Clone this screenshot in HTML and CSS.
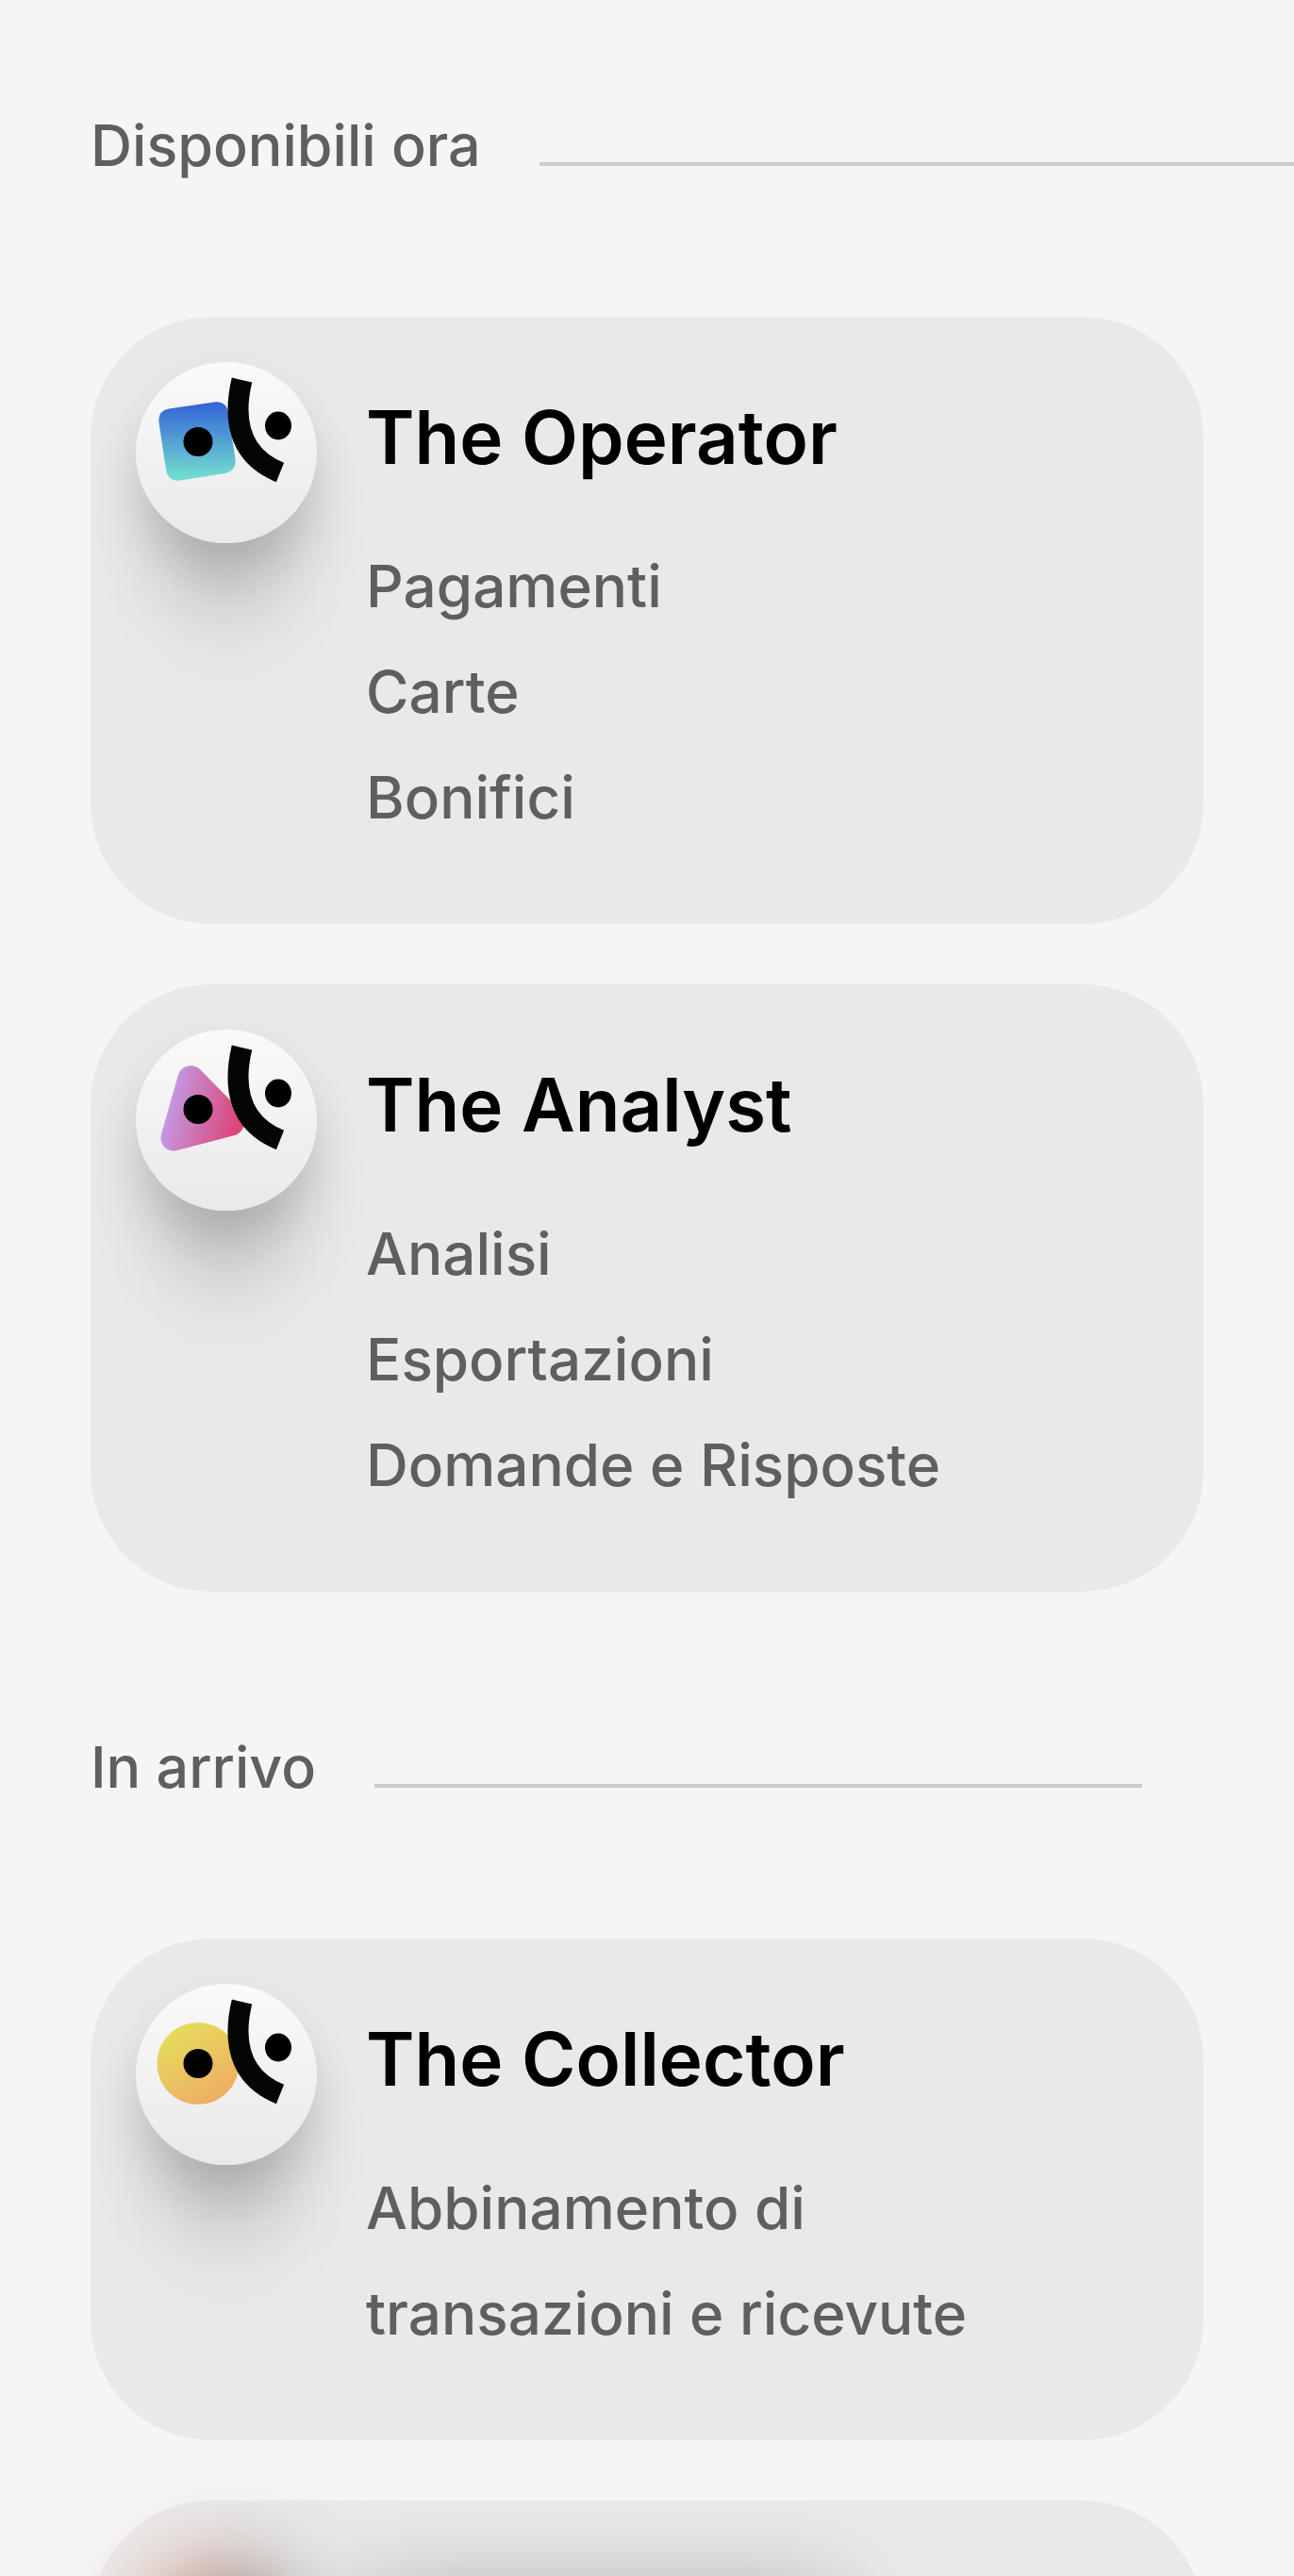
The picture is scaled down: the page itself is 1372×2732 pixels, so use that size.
FILE: index.html
```html
<!DOCTYPE html>
<html lang="it">
<head>
    <meta charset="UTF-8">
    <meta name="viewport" content="width=device-width, initial-scale=1.0">
    <title>Agenti</title>
    <link rel="stylesheet" href="styles.css">
</head>
<body>
    <!-- shared gradients and face -->
    <svg class="defs" aria-hidden="true">
        <defs>
            <linearGradient id="blue" x1="0" y1="0" x2="0" y2="1">
                <stop offset="0.05" stop-color="#3568d8"/>
                <stop offset="0.95" stop-color="#72dbd0"/>
            </linearGradient>
            <linearGradient id="pink" x1="0" y1="0.4" x2="1" y2="0.65">
                <stop offset="0.08" stop-color="#c29ae4"/>
                <stop offset="0.92" stop-color="#dc4579"/>
            </linearGradient>
            <linearGradient id="yellow" x1="0.2" y1="0" x2="0.8" y2="1">
                <stop offset="0.1" stop-color="#e5da5b"/>
                <stop offset="0.9" stop-color="#efaf65"/>
            </linearGradient>
            <g id="face">
                <circle cx="66" cy="84.500" r="15.500"/>
                <ellipse cx="151" cy="67.500" rx="14" ry="15"/>
                <path d="M112.500 19C103 59 108 99 153 117" fill="none" stroke="#050505" stroke-width="22"/>
            </g>
        </defs>
    </svg>

    <main class="agents">
        <section class="group">
            <h2 class="group-title">Disponibili ora</h2>
            <article class="card">
                <div class="avatar">
                    <svg viewBox="0 0 192 192">
                        <path d="M35 49.500L83 42.500Q96 41 98 54L105.500 103Q107 115 95 118L47 125.500Q34 127 32 114L24.500 64Q23 52 35 49.500Z" fill="url(#blue)"/>
                        <use href="#face"/>
                    </svg>
                </div>
                <div class="info">
                    <h3>The Operator</h3>
                    <ul>
                        <li>Pagamenti</li>
                        <li>Carte</li>
                        <li>Bonifici</li>
                    </ul>
                </div>
            </article>
            <article class="card">
                <div class="avatar">
                    <svg viewBox="0 0 192 192">
                        <path d="M45 48C48 38 60 35 68 42L112 87C119 95 116 108 105 112L44 128C34 131 24 122 27 111Z" fill="url(#pink)"/>
                        <use href="#face"/>
                    </svg>
                </div>
                <div class="info">
                    <h3>The Analyst</h3>
                    <ul>
                        <li>Analisi</li>
                        <li>Esportazioni</li>
                        <li>Domande e Risposte</li>
                    </ul>
                </div>
            </article>
        </section>

        <section class="group">
            <h2 class="group-title">In arrivo</h2>
            <article class="card">
                <div class="avatar">
                    <svg viewBox="0 0 192 192">
                        <circle cx="66" cy="84.500" r="43.500" fill="url(#yellow)"/>
                        <use href="#face"/>
                    </svg>
                </div>
                <div class="info">
                    <h3>The Collector</h3>
                    <ul>
                        <li>Abbinamento di transazioni e ricevute</li>
                    </ul>
                </div>
            </article>
            <!-- not revealed yet -->
            <article class="card hidden-card" aria-hidden="true">
                <div class="avatar">
                    <svg viewBox="0 0 192 192">
                        <circle cx="66" cy="84" r="44" fill="#e8704c"/>
                        <use href="#face"/>
                    </svg>
                </div>
                <div class="info">
                    <div class="bar"></div>
                </div>
            </article>
        </section>
    </main>
</body>
</html>
```
FILE: styles.css
```css
* {
    box-sizing: border-box;
}
body {
    margin: 0;
    background-color: #f5f5f5;
    color: #5f5f5f;
    font-family: Inter, "Liberation Sans", sans-serif;
    font-size: 62px;
    line-height: 112px;
}
h2, h3, ul {
    margin: 0;
    padding: 0;
}
.defs {
    position: absolute;
    width: 0;
    height: 0;
}
.agents {
    display: flex;
    flex-direction: column;
    gap: 130px;
    height: 100vh;
    padding: 98px 96px 0;
    overflow: hidden;
}
.group {
    display: flex;
    flex-direction: column;
    flex-shrink: 0;
    gap: 64px;
}
.group-title {
    display: flex;
    align-items: baseline;
    gap: 62px;
    margin-bottom: 62px;
    font-size: 61px;
    font-weight: 450;
    white-space: nowrap;
}
.group-title::after {
    content: "";
    flex: 0 0 69%;
    height: 4px;
    background-color: #cccccc;
}
.card {
    display: flex;
    gap: 52px;
    padding: 48px;
    border-radius: 128px;
    background-color: #e9e9e9;
}
.avatar {
    flex-shrink: 0;
    width: 192px;
    height: 192px;
    border-radius: 50%;
    background: linear-gradient(#fafafa, #e9e9e9);
    box-shadow: 0 24px 48px rgba(0, 0, 0, 0.12),
        0 72px 80px -16px rgba(0, 0, 0, 0.16),
        0 144px 96px -32px rgba(0, 0, 0, 0.05);
}
.avatar svg {
    display: block;
}
.info {
    flex: 1;
    padding: 24px 128px 30px 0;
}
.info h3 {
    margin-bottom: 46px;
    color: #000;
    font-size: 78px;
    font-weight: 600;
}
.info ul {
    list-style: none;
    font-weight: 450;
}
.hidden-card .avatar,
.hidden-card .bar {
    filter: blur(48px);
}
.bar {
    width: 500px;
    height: 72px;
    margin-top: 24px;
    background-color: #000;
    opacity: 0.28;
}
```
